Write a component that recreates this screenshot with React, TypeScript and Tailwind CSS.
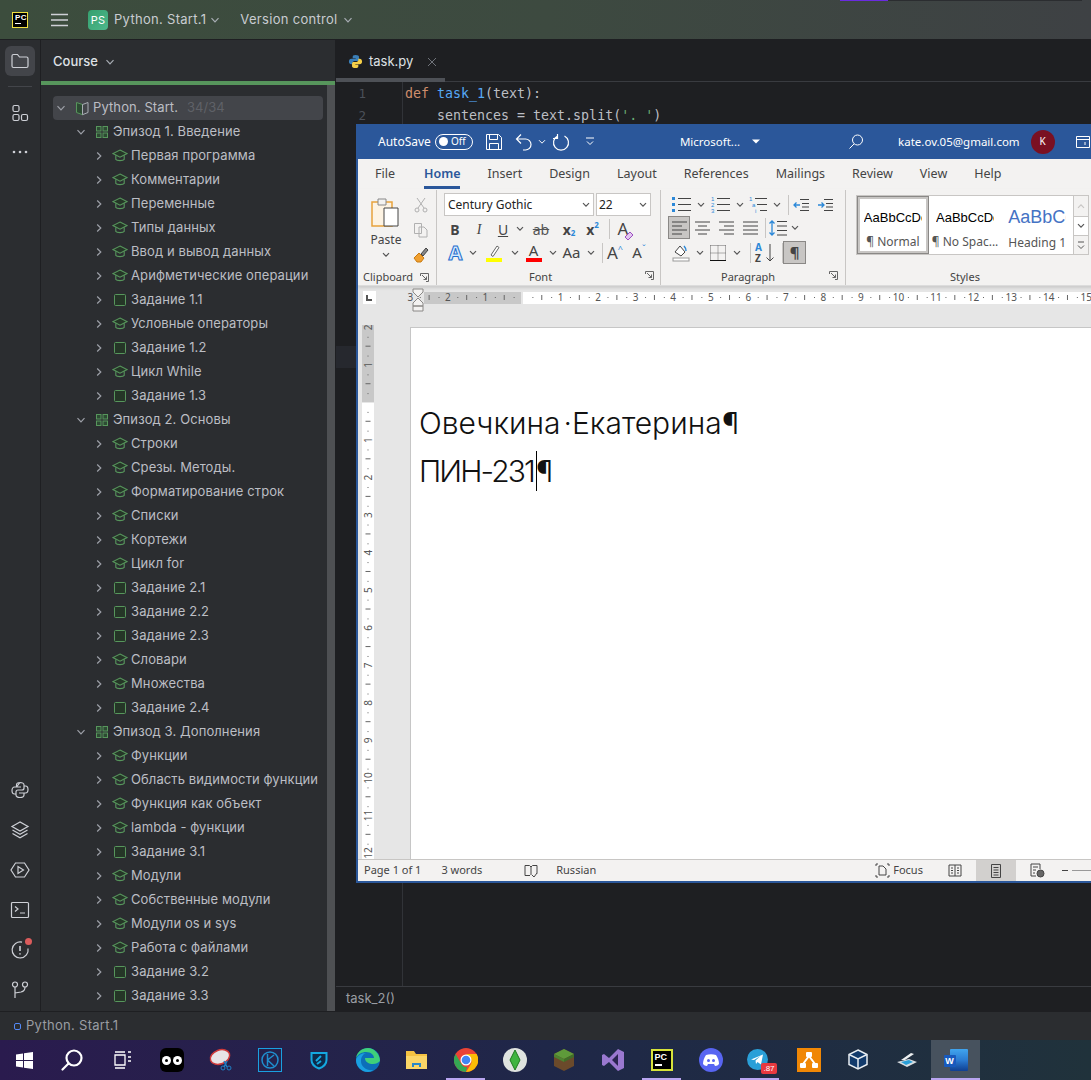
import React from 'react';

type Kind = 'book' | 'episode' | 'lesson' | 'task';
interface Row { label: string; kind: Kind; level: number; open?: boolean; extra?: string }

const les = (label: string): Row => ({ label, kind: 'lesson', level: 2 });
const tsk = (label: string): Row => ({ label, kind: 'task', level: 2 });
const ep = (label: string): Row => ({ label, kind: 'episode', level: 1, open: true });

const rows: Row[] = [
  { label: 'Python. Start.', kind: 'book', level: 0, open: true, extra: '34/34' },
  ep('Эпизод 1. Введение'),
  les('Первая программа'), les('Комментарии'), les('Переменные'), les('Типы данных'),
  les('Ввод и вывод данных'), les('Арифметические операции'), tsk('Задание 1.1'),
  les('Условные операторы'), tsk('Задание 1.2'), les('Цикл While'), tsk('Задание 1.3'),
  ep('Эпизод 2. Основы'),
  les('Строки'), les('Срезы. Методы.'), les('Форматирование строк'), les('Списки'),
  les('Кортежи'), les('Цикл for'), tsk('Задание 2.1'), tsk('Задание 2.2'), tsk('Задание 2.3'),
  les('Словари'), les('Множества'), tsk('Задание 2.4'),
  ep('Эпизод 3. Дополнения'),
  les('Функции'), les('Область видимости функции'), les('Функция как объект'),
  les('lambda - функции'), tsk('Задание 3.1'), les('Модули'), les('Собственные модули'),
  les('Модули os и sys'), les('Работа с файлами'), tsk('Задание 3.2'), tsk('Задание 3.3'),
];

// --- ide icons ---
function Chev({ open, className = '' }: { open?: boolean; className?: string }) {
  return (
    <svg width="10" height="10" viewBox="0 0 10 10" fill="none" stroke="currentColor" strokeWidth="1.2" className={className}>
      {open ? <path d="M1.5 3.2 5 6.8l3.5-3.6" /> : <path d="M3.2 1.5 6.8 5 3.2 8.5" />}
    </svg>
  );
}

function TreeIcon({ kind }: { kind: Kind }) {
  if (kind === 'book') return (
    <svg width="15" height="15" viewBox="0 0 15 15" fill="none" strokeWidth="1">
      <path d="M7.5 3.5 1.5 1.5v10l6 2.2z" fill="#2d4a33" stroke="#57965c" />
      <path d="M7.5 3.5l5.5-2v10l-5.5 2.2z" stroke="#a8adb4" />
    </svg>
  );
  if (kind === 'episode') return (
    <svg width="14" height="14" viewBox="0 0 14 14" fill="#2d4a33" stroke="#57965c">
      <rect x="1.5" y="1.5" width="4.5" height="4.5" /><rect x="8" y="1.5" width="4.5" height="4.5" />
      <rect x="1.5" y="8" width="4.5" height="4.5" /><rect x="8" y="8" width="4.5" height="4.5" />
    </svg>
  );
  if (kind === 'task') return (
    <svg width="14" height="14" viewBox="0 0 14 14"><rect x="1.5" y="1.5" width="11" height="11" rx="1" fill="#253627" stroke="#57965c" /></svg>
  );
  return (
    <svg width="16" height="14" viewBox="0 0 16 14" fill="none" stroke="#57965c" strokeWidth="1.1">
      <path d="M8 1 15 4.6 8 8.2 1 4.6z" fill="#253627" />
      <path d="M3.8 6.2v4.2c1 1.6 7.4 1.6 8.4 0V6.2" />
    </svg>
  );
}

function Stripe({ children, className = '' }: { children: React.ReactNode; className?: string }) {
  return <div className={`flex items-center justify-center w-[30px] h-[30px] rounded-md ${className}`}>{children}</div>;
}

const st = { fill: 'none', stroke: '#ced0d6', strokeWidth: 1.2 };

function LeftStripe() {
  return (
    <div className="w-[41px] shrink-0 flex flex-col items-center border-r border-[#1e1f22] bg-[#2b2d30] pt-[6px] pb-[6px]">
      <Stripe className="bg-[#43454a]">
        <svg width="20" height="20" viewBox="0 0 20 20" {...st}><path d="M2 5a1.5 1.5 0 0 1 1.5-1.5h4l2 2.5h7A1.5 1.5 0 0 1 18 7.500V15a1.5 1.5 0 0 1-1.500 1.500h-13A1.500 1.500 0 0 1 2 15z" /></svg>
      </Stripe>
      <div className="w-6 h-px bg-[#43454a] mt-[10px] mb-[11px]" />
      <Stripe>
        <svg width="20" height="20" viewBox="0 0 20 20" {...st}><rect x="3" y="2.500" width="6" height="6" rx="1.500" /><rect x="3" y="11.500" width="6" height="6" rx="1.500" /><rect x="11.500" y="11.500" width="6" height="6" rx="1.500" /></svg>
      </Stripe>
      <Stripe className="mt-[9px]">
        <svg width="18" height="6" viewBox="0 0 18 6" fill="#ced0d6"><circle cx="3" cy="3" r="1.300" /><circle cx="9" cy="3" r="1.300" /><circle cx="15" cy="3" r="1.300" /></svg>
      </Stripe>
      <div className="flex-1" />
      <div className="flex flex-col items-center gap-[10px]">
        <Stripe>
          <svg width="20" height="20" viewBox="0 0 20 20" {...st}><path d="M10 2.500c-2.500 0-3.500 1-3.500 2.500v2H11M6.500 7H4.500C3 7 2 8.500 2 10.500S3 14 4.500 14H6v-2c0-1.300.8-2 2-2h4c1.300 0 2-.8 2-2V5c0-1.500-1.500-2.500-4-2.500zM14 6h1.500C17 6 18 7.500 18 9.500S17 13 15.500 13H9M14 13v2c0 1.500-1.500 2.500-4 2.500s-4-1-4-2.500v-1" /></svg>
        </Stripe>
        <Stripe>
          <svg width="20" height="20" viewBox="0 0 20 20" {...st}><path d="M10 2 2 6.500 10 11l8-4.500zM2.500 10 10 14.200 17.500 10M2.500 13.500 10 17.800l7.500-4.300" /></svg>
        </Stripe>
        <Stripe>
          <svg width="22" height="20" viewBox="0 0 22 20" {...st}><path d="M6.500 3h9L20 10l-4.500 7h-9L2 10z" /><path d="M9 6.500v7l5.500-3.500z" /></svg>
        </Stripe>
        <Stripe>
          <svg width="20" height="18" viewBox="0 0 20 18" {...st}><rect x="1.500" y="1.500" width="17" height="15" rx="1" /><path d="M5 5.500 8 8 5 10.500M10 12h5" /></svg>
        </Stripe>
        <Stripe className="relative">
          <svg width="20" height="20" viewBox="0 0 20 20" {...st}><path d="M12 2.200A8 8 0 1 0 18 8.500" /><path d="M10 6v5M10 13.200v1.300" strokeWidth="1.600" /></svg>
          <span className="absolute top-[3px] right-[3px] w-[7px] h-[7px] rounded-full bg-[#db5c5c]" />
        </Stripe>
        <Stripe>
          <svg width="20" height="20" viewBox="0 0 20 20" {...st}><circle cx="5" cy="4.500" r="2.500" /><circle cx="15" cy="4.500" r="2.500" /><path d="M5 7v11M15 7c0 3-1.500 4.500-4 5l-6 1" /></svg>
        </Stripe>
      </div>
    </div>
  );
}

function TreeRow({ row }: { row: Row }) {
  const pad = row.level === 0 ? 'pl-[3px]' : row.level === 1 ? 'pl-[23px]' : 'pl-[41px]';
  const bg = row.level === 0 ? 'bg-[#43454a] rounded' : '';
  return (
    <div className={`h-6 flex items-center ${pad} ${bg} whitespace-nowrap`}>
      <Chev open={row.open} className="text-[#9da0a8]" />
      <div className="flex justify-center w-[16px] ml-[8px] mr-[3px]"><TreeIcon kind={row.kind} /></div>
      <span className="text-[13px] text-[#bcbec4] tracking-[0.1px]">{row.label}</span>
      {row.extra && <span className="ml-[9px] text-[13px] text-[#5f6167]">{row.extra}</span>}
    </div>
  );
}

function CoursePanel() {
  return (
    <div className="w-[294px] shrink-0 flex flex-col bg-[#2b2d30]">
      <div className="h-[41px] flex items-center pl-3 pt-[2px] gap-[7px] text-[#dfe1e5] text-[13px] font-medium">
        Course <Chev open className="text-[#a8adb4]" />
      </div>
      <div className="h-1 bg-[#57965c] shrink-0" />
      <div className="flex-1 flex min-h-0">
        <div className="flex-1 pl-3 pr-[4px] pt-[9px] overflow-hidden">
          <div className="mt-[2px]">
            {rows.map((r, i) => <TreeRow key={i} row={r} />)}
          </div>
        </div>
        <div className="w-2 bg-[#4e5053]" />
      </div>
    </div>
  );
}

function PyLogo() {
  return (
    <svg width="15" height="15" viewBox="0 0 16 16">
      <path d="M8 1C5.500 1 5 2 5 3v1.500h3.200V5H3.500C2 5 1 6.200 1 8s1 3 2.500 3H5V9.500C5 8.300 5.800 7.500 7 7.500h3c1 0 1.700-.7 1.700-1.700V3C11.700 1.800 10.500 1 8 1z" fill="#3b7fb8" />
      <path d="M8 15c2.500 0 3-1 3-2v-1.500H7.800V11h4.700c1.500 0 2.500-1.200 2.500-3s-1-3-2.500-3H11v1.500c0 1.200-.8 2-2 2H6c-1 0-1.700.7-1.700 1.700V13c0 1.200 1.200 2 3.700 2z" fill="#f5cf48" />
    </svg>
  );
}

function Editor() {
  return (
    <div className="flex-1 flex flex-col bg-[#1e1f22] border-l border-[#1e1f22] min-w-0">
      <div className="h-[38px] flex items-center pl-[12px] pt-[5px] gap-[6px] text-[13px] text-[#dfe1e5] shrink-0">
        <PyLogo /><span>task.py</span>
        <svg width="10" height="10" viewBox="0 0 10 10" stroke="#6f737a" className="ml-[8px]"><path d="m1 1 8 8M9 1 1 9" /></svg>
      </div>
      <div className="h-1 flex shrink-0 border-b border-[#393b40]">
        <div className="w-[109px] h-1 bg-[#4e5157]" />
      </div>
      <div className="flex-1 flex min-h-0 font-['DejaVu_Sans_Mono',monospace] text-[13.3px] leading-[22px]">
        <div className="w-[67px] shrink-0 border-r border-[#313338] pt-[1px] text-[#4b5059] text-[12.500px] text-right">
          <div className="pr-[36px] h-[22px]">1</div>
          <div className="pr-[36px] h-[22px]">2</div>
          <div className="mt-[219px] h-[22px] bg-[#26282e] pr-[36px]">1</div>
        </div>
        <div className="pl-[2px] pt-[1px] whitespace-pre text-[#bcbec4]">
          <div><span className="text-[#cf8e6d]">def </span><span className="text-[#56a8f5]">task_1</span>(text):</div>
          <div>    sentences = text.split(<span className="text-[#6aab73]">'. '</span>)</div>
        </div>
      </div>
      <div className="h-[25px] shrink-0 border-t border-[#393b40] flex items-center pl-[10px] text-[13px] text-[#9a9da3]">task_2()</div>
    </div>
  );
}

// --- word bits ---
const wi = { fill: 'none', stroke: '#444', strokeWidth: 1 };
const Drop = ({ className = '' }: { className?: string }) => (
  <svg width="8" height="6" viewBox="0 0 8 6" fill="none" stroke="#555" strokeWidth="1.200" className={`shrink-0 ${className}`}><path d="M1 1.200 4 4.200 7 1.200" /></svg>
);
const Launcher = () => (
  <svg width="9" height="9" viewBox="0 0 9 9" fill="none" stroke="#666"><path d="M.5 3V.5H8.500V8.500H6M2 2l4.500 4.500M6.500 3.500v3h-3" /></svg>
);
const Cell = ({ w, children, className = '' }: { w: string; children?: React.ReactNode; className?: string }) => (
  <div className={`flex items-center justify-center shrink-0 ${w} ${className}`}>{children}</div>
);
const Sep = ({ h = 'h-[20px]' }: { h?: string }) => <div className={`w-px ${h} bg-[#c8c6c4] shrink-0`} />;

function Lines({ kind }: { kind: 'left' | 'center' | 'right' | 'just' }) {
  const d = {
    left: 'M2 3h15M2 7h10M2 11h15M2 15h10',
    center: 'M2 3h15M5 7h9M2 11h15M5 15h9',
    right: 'M2 3h15M7 7h10M2 11h15M7 15h10',
    just: 'M2 3h15M2 7h15M2 11h15M2 15h15',
  }[kind];
  return <svg width="19" height="18" viewBox="0 0 19 18" {...wi}><path d={d} /></svg>;
}

function ClipboardGroup() {
  return (
    <div className="w-[79px] shrink-0 flex flex-col border-r border-[#c8c6c4]">
      <div className="flex flex-1 pl-[12px] pt-[6px]">
        <div className="w-[32px] flex flex-col items-center text-[12px] text-[#444] leading-[14px]">
          <svg width="32" height="34" viewBox="0 0 32 34" fill="none">
            <path d="M2 6h20v24H2z" fill="#fdf3e3" stroke="#e8a33c" strokeWidth="1.500" />
            <path d="M8 3h8v6H8z" fill="#f3f2f1" stroke="#888" />
            <path d="M14 12h14v18H14z" fill="#fff" stroke="#444" />
          </svg>
          <span className="mt-[3px]">Paste</span>
          <Drop className="mt-[5px]" />
        </div>
        <div className="ml-[11px] flex flex-col items-center gap-[9px] pt-[1px]">
          <svg width="14" height="16" viewBox="0 0 14 16" fill="none" stroke="#b0b0b0"><path d="m3 1 7 10M11 1 4 11" /><circle cx="3" cy="13" r="2" /><circle cx="11" cy="13" r="2" /></svg>
          <svg width="16" height="16" viewBox="0 0 16 16" fill="none" stroke="#b0b0b0"><path d="M1.500 1.500h7v10h-7zM6 5h5l3 3v7H6z" /></svg>
          <svg width="16" height="16" viewBox="0 0 16 16" fill="none"><path d="M1 11l5-5 5 5-3 4H4z" fill="#f0a030" stroke="#c87a10" /><path d="M8 7l5-6 2 2-5 6z" fill="#888" stroke="#444" /></svg>
        </div>
      </div>
      <div className="h-[16px] flex items-center justify-between pl-[5px] pr-[7px] text-[11px] text-[#444]">Clipboard <Launcher /></div>
    </div>
  );
}

function FontGroup() {
  const t = "text-[#444] font-['Noto_Sans',sans-serif]";
  return (
    <div className="w-[224px] shrink-0 flex flex-col border-r border-[#c8c6c4] pl-[7px]">
      <div className="flex gap-[2px] pt-[3px]">
        <div className="w-[150px] h-[23px] bg-white border border-[#c8c6c4] flex items-center justify-between px-[3px] text-[12px] text-[#222]">Century Gothic <Drop /></div>
        <div className="w-[55px] h-[23px] bg-white border border-[#c8c6c4] flex items-center justify-between px-[2px] pr-[3px] text-[12px] text-[#222]">22 <Drop /></div>
      </div>
      <div className={`flex items-center h-[22px] mt-[2px] text-[14px] ${t}`}>
        <Cell w="w-[22px]" className="font-bold">B</Cell>
        <Cell w="w-[26px]" className="italic font-['Liberation_Serif',serif]">I</Cell>
        <Cell w="w-[22px]" className="underline">U</Cell>
        <Cell w="w-[12px]"><Drop /></Cell>
        <Cell w="w-[30px]" className="line-through text-[#555]">ab</Cell>
        <Cell w="w-[26px]" className="font-bold">x<span className="text-[8px] text-[#2b88d8] mt-[8px]">2</span></Cell>
        <Cell w="w-[21px]" className="font-bold">x<span className="text-[8px] text-[#2b88d8] -mt-[8px]">2</span></Cell>
        <Cell w="w-[6px]" />
        <Sep />
        <Cell w="w-[26px]" className="relative text-[17px]">A
          <svg width="10" height="10" viewBox="0 0 10 10" className="absolute right-[2px] bottom-[1px]"><path d="M1 6l5-5 3 3-5 5z" fill="#e2c6f0" stroke="#9b4fc0" /></svg>
        </Cell>
      </div>
      <div className={`flex items-center h-[23px] mt-[1px] ${t}`}>
        <Cell w="w-[23px]" className="text-[20px] font-bold text-[#d5e9fb] leading-none [-webkit-text-stroke:1px_#1f6fd0]">A</Cell>
        <Cell w="w-[12px]"><Drop /></Cell>
        <Cell w="w-[30px]" className="flex-col text-[0px]">
          <svg width="17" height="16" viewBox="0 0 17 16"><path d="M5 11l6-9 2 1.500-6 9z" fill="#fff" stroke="#666" /></svg>
          <div className="w-[16px] h-[4px] bg-[#ffff00] -mt-[2px]" />
        </Cell>
        <Cell w="w-[11px]"><Drop /></Cell>
        <Cell w="w-[27px]" className="flex-col text-[15px] leading-[15px]">A<div className="w-[16px] h-[4px] bg-[#ff0000]" /></Cell>
        <Cell w="w-[11px]"><Drop /></Cell>
        <Cell w="w-[27px]" className="text-[15px]">Aa</Cell>
        <Cell w="w-[11px]"><Drop /></Cell>
        <Cell w="w-[6px]" />
        <Sep />
        <Cell w="w-[24px]" className="text-[17px]">A<span className="text-[9px] text-[#2b88d8] -mt-[8px]">^</span></Cell>
        <Cell w="w-[24px]" className="text-[15px]">A<span className="text-[9px] text-[#2b88d8] -mt-[8px]">ˇ</span></Cell>
      </div>
      <div className="flex-1 flex items-end justify-between pr-[6px] text-[11px] text-[#444]">
        <span className="ml-[85px] h-[16px]">Font</span>
        <div className="h-[14px]"><Launcher /></div>
      </div>
    </div>
  );
}

function ListIcon({ numbered }: { numbered?: boolean }) {
  return (
    <svg width="21" height="17" viewBox="0 0 21 17" fill="none">
      <path d="M7 2.500h13M7 8.500h13M7 14.500h13" stroke="#444" />
      {numbered
        ? <g fill="#2b88d8" fontSize="6" fontFamily="Liberation Sans"><text x="1" y="5">1</text><text x="1" y="11">2</text><text x="1" y="17">3</text></g>
        : <g fill="#2b88d8"><rect x="1" y="1" width="3" height="3" /><rect x="1" y="7" width="3" height="3" /><rect x="1" y="13" width="3" height="3" /></g>}
    </svg>
  );
}

function ParagraphGroup() {
  return (
    <div className="w-[185px] shrink-0 flex flex-col border-r border-[#c8c6c4] pl-[7px]">
      <div className="flex items-center h-[21px] mt-[4px]">
        <Cell w="w-[26px]"><ListIcon /></Cell><Cell w="w-[13px]"><Drop /></Cell>
        <Cell w="w-[26px]"><ListIcon numbered /></Cell><Cell w="w-[13px]"><Drop /></Cell>
        <Cell w="w-[25px]">
          <svg width="19" height="17" viewBox="0 0 19 17" fill="none"><path d="M6 2.500h12M8 8.500h10M11 14.500h7" stroke="#444" /><g fill="#2b88d8" fontSize="6" fontFamily="Liberation Sans"><text x="0" y="5">1</text><text x="3" y="11">a</text><text x="6" y="17">i</text></g></svg>
        </Cell>
        <Cell w="w-[11px]"><Drop /></Cell>
        <Cell w="w-[6px]" /><Sep />
        <Cell w="w-[24px]">
          <svg width="17" height="14" viewBox="0 0 17 14" fill="none" stroke="#444"><path d="M7 1.500h9M9 5.500h7M9 9h7M7 12.500h9" /><path d="M7 7H1M3.500 4.500 1 7l2.500 2.500" stroke="#2b88d8" strokeWidth="1.300" /></svg>
        </Cell>
        <Cell w="w-[24px]">
          <svg width="17" height="14" viewBox="0 0 17 14" fill="none" stroke="#444"><path d="M7 1.500h9M9 5.500h7M9 9h7M7 12.500h9" /><path d="M1 7h6M4.500 4.500 7 7 4.500 9.500" stroke="#2b88d8" strokeWidth="1.300" /></svg>
        </Cell>
      </div>
      <div className="flex items-center h-[23px] mt-[1px]">
        <Cell w="w-[22px]" className="h-[23px] bg-[#c8c6c4] border border-[#8a8886]"><Lines kind="left" /></Cell>
        <Cell w="w-[24px]"><Lines kind="center" /></Cell>
        <Cell w="w-[24px]"><Lines kind="right" /></Cell>
        <Cell w="w-[24px]"><Lines kind="just" /></Cell>
        <Cell w="w-[3px]" /><Sep />
        <Cell w="w-[24px]">
          <svg width="20" height="18" viewBox="0 0 20 18" fill="none"><path d="M9 2.500h10M9 7h10M9 11.500h10M9 16h10" stroke="#444" /><path d="M4 2v14M1.500 4.500 4 2l2.500 2.500M1.500 13.500 4 16l2.500-2.500" stroke="#2b88d8" strokeWidth="1.300" /></svg>
        </Cell>
        <Cell w="w-[10px]"><Drop /></Cell>
      </div>
      <div className="flex items-center h-[23px] mt-[2px]">
        <Cell w="w-[25px]">
          <svg width="18" height="19" viewBox="0 0 18 19" fill="none"><path d="M3 9l5-6 5 6-4 4z" stroke="#444" fill="#fff" /><path d="M12 3c1 1 2 3 2 5" stroke="#2b88d8" strokeWidth="1.500" /><rect x="1" y="15" width="16" height="3" fill="#fff" stroke="#999" /></svg>
        </Cell>
        <Cell w="w-[13px]"><Drop /></Cell>
        <Cell w="w-[24px]">
          <svg width="16" height="16" viewBox="0 0 16 16" fill="none" stroke="#666" strokeDasharray="1 1"><path d="M.5.500h15M.5 8h15M8 .5v15M.5.500v15M15.500.500v15" /><path d="M0 15.500h16" stroke="#111" strokeDasharray="none" /></svg>
        </Cell>
        <Cell w="w-[13px]"><Drop /></Cell>
        <Cell w="w-[7px]" /><Sep />
        <Cell w="w-[27px]" className="relative">
          <svg width="20" height="20" viewBox="0 0 20 20" fill="none" stroke="#444"><path d="M15 1v17M11.500 14.500 15 18l3.500-3.500" /></svg>
          <span className="absolute left-[4px] top-[-1px] text-[10px] leading-[11px] font-bold text-[#2b88d8]">A<br /><span className="text-[#444]">Z</span></span>
        </Cell>
        <Cell w="w-[4px]" /><Sep />
        <Cell w="w-[23px]" className="h-[23px] bg-[#c8c6c4] border border-[#8a8886] text-[15px] font-bold text-[#444]">¶</Cell>
      </div>
      <div className="flex-1 flex items-end justify-between pr-[7px] text-[11px] text-[#444]">
        <span className="ml-[53px] h-[16px]">Paragraph</span>
        <div className="h-[14px]"><Launcher /></div>
      </div>
    </div>
  );
}

function StylesGroup() {
  const label = 'text-[12px] text-[#555] leading-[14px] whitespace-nowrap';
  const sample = "font-['Liberation_Sans',sans-serif] overflow-hidden whitespace-nowrap";
  return (
    <div className="flex-1 flex flex-col pl-[10px]">
      <div className="flex mt-[5px] h-[60px]">
        <div className="w-[218px] flex bg-white border border-[#c8c6c4]">
          <div className="w-[72px] h-full border-[3px] border-[#c8c6c4] outline outline-1 -outline-offset-1 outline-[#8a8886] flex flex-col items-center pt-[11px] gap-[10px]">
            <div className={`${sample} w-[58px] text-[13px] leading-[15px] text-black`}>AaBbCcDc</div>
            <div className={label}>¶ Normal</div>
          </div>
          <div className="w-[73px] flex flex-col items-center pt-[14px] gap-[10px]">
            <div className={`${sample} w-[58px] text-[13px] leading-[15px] text-black`}>AaBbCcDc</div>
            <div className={label}>¶ No Spac...</div>
          </div>
          <div className="w-[72px] flex flex-col items-center pt-[11px] gap-[8px]">
            <div className={`${sample} w-[58px] text-[18px] leading-[21px] text-[#4472c4]`}>AaBbCc</div>
            <div className={label}>Heading 1</div>
          </div>
        </div>
        <div className="w-[15px] flex flex-col border border-l-0 border-[#c8c6c4] bg-[#f3f2f1]">
          <Cell w="w-full" className="h-[20px]"><svg width="8" height="6" viewBox="0 0 8 6" fill="none" stroke="#c8c6c4" strokeWidth="1.200"><path d="M1 4.800 4 1.800 7 4.800" /></svg></Cell>
          <Cell w="w-full" className="h-[20px] border-y border-[#c8c6c4] bg-white"><Drop /></Cell>
          <Cell w="w-full" className="flex-1"><svg width="8" height="9" viewBox="0 0 8 9" fill="none" stroke="#555"><path d="M1 1h6M1 4.500 4 7.500 7 4.500" /></svg></Cell>
        </div>
      </div>
      <div className="flex-1 flex items-end text-[11px] text-[#444]">
        <span className="ml-[94px] h-[16px]">Styles</span>
      </div>
    </div>
  );
}

function HRuler() {
  const x0 = 118; // left margin in svg coords
  const inch = 37.55;
  const marks: React.ReactNode[] = [];
  for (let i = -12; i <= 62; i++) {
    const x = x0 + (i * inch) / 4;
    const n = i / 4;
    if (i % 4 === 0 && i !== 0) {
      marks.push(<text key={i} x={x} y="13" fontSize="10" textAnchor="middle" fill="#555" fontFamily="Noto Sans">{Math.abs(n)}</text>);
    } else if (i % 2 === 0 && i !== 0) {
      marks.push(<path key={i} d={`M${x} 7v5`} stroke="#666" />);
    } else if (i !== 0) {
      marks.push(<rect key={i} x={x} y="9" width="1" height="1" fill="#666" />);
    }
  }
  return (
    <svg width="686" height="28" viewBox="0 0 686 28" className="block">
      <rect x="19" y="4" width="97" height="12" fill="#c8c8c8" />
      <rect x="118" y="4" width="568" height="12" fill="#fff" />
      {marks}
      <path d="M8 1h10v3l-5 5-5-5zM8 18v-3l5-5 5 5v3zM8 18h10v5H8z" fill="#f3f2f1" stroke="#8a8886" />
    </svg>
  );
}

function VRuler() {
  const zero = 77.5;
  const inch = 37.55;
  const marks: React.ReactNode[] = [];
  for (let i = -8; i <= 50; i++) {
    const y = zero + (i * inch) / 4;
    if (i % 4 === 0 && i !== 0) {
      marks.push(<text key={i} x="0" y="0" fontSize="10" textAnchor="middle" fill="#555" fontFamily="Noto Sans" transform={`translate(9.500 ${y}) rotate(-90)`}>{Math.abs(i / 4)}</text>);
    } else if (i % 2 === 0 && i !== 0) {
      marks.push(<path key={i} d={`M3.500 ${y}h5`} stroke="#666" />);
    } else if (i !== 0) {
      marks.push(<rect key={i} x="5.500" y={y} width="1" height="1" fill="#666" />);
    }
  }
  return (
    <svg width="12" height="535" viewBox="0 0 12 535" className="block shrink-0">
      <rect width="12" height="77" fill="#c8c8c8" />
      <rect y="78" width="12" height="457" fill="#fff" />
      {marks}
    </svg>
  );
}

function WordWindow() {
  const ui = "font-['Noto_Sans',sans-serif]";
  return (
    <div className={`absolute left-[356px] top-[124px] w-[760px] h-[759px] flex flex-col border-l-2 border-b-2 border-[#2b579a] bg-[#e6e6e6] ${ui}`}>
      <div className="h-[35px] shrink-0 bg-[#2b579a] flex items-center text-white text-[12px] pl-[20px]">
        <span>AutoSave</span>
        <div className="ml-[4px] w-[38px] h-[16px] rounded-full border border-white flex items-center pl-[3px] gap-[3px] text-[10px]">
          <span className="w-[9px] h-[9px] rounded-full bg-white" /> Off
        </div>
        <svg width="18" height="18" viewBox="0 0 18 18" fill="none" stroke="#fff" className="ml-[12px]"><path d="M1.500 1.500h12l3 3v12h-15zM4.500 1.500v5h8v-5M4.500 16.500v-6h9v6" /></svg>
        <svg width="18" height="18" viewBox="0 0 18 18" fill="none" stroke="#fff" strokeWidth="1.200" className="ml-[12px]"><path d="M2 6h8.500a5.500 5.500 0 0 1 0 11H8M6 1.500 1.500 6 6 10.500" /></svg>
        <svg width="8" height="6" viewBox="0 0 8 6" fill="none" stroke="#fff" className="ml-[5px]"><path d="M1 1.200 4 4.200 7 1.200" /></svg>
        <svg width="18" height="18" viewBox="0 0 18 18" fill="none" stroke="#fff" strokeWidth="1.200" className="ml-[6px]"><path d="M5.500 3a7.500 7.500 0 1 0 7 0M5.500 1v4.500H1" /></svg>
        <svg width="10" height="9" viewBox="0 0 10 9" fill="none" stroke="#fff" className="ml-[15px]"><path d="M1 1h8M2 4.500l3 3 3-3" /></svg>
        <span className="ml-[85px] text-[11.500px] whitespace-nowrap">Microsoft...</span>
        <svg width="8" height="5" viewBox="0 0 8 5" fill="#fff" className="ml-[12px]"><path d="M0 .5h8L4 4.500z" /></svg>
        <svg width="16" height="16" viewBox="0 0 16 16" fill="none" stroke="#fff" className="ml-[88px]"><circle cx="9.500" cy="6" r="5" /><path d="M6 10 1.500 14.500" /></svg>
        <span className="ml-[34px] text-[11.500px] whitespace-nowrap">kate.ov.05@gmail.com</span>
        <span className="ml-[11px] w-[24px] h-[24px] rounded-full bg-[#7a1022] flex items-center justify-center text-[10px] shrink-0">K</span>
        <svg width="14" height="12" viewBox="0 0 14 12" fill="none" stroke="#fff" className="ml-[21px] shrink-0"><path d="M.5.500h13v11H.5zM.5 3.500h13M9 6v3" /></svg>
      </div>
      <div className="h-[30px] shrink-0 bg-[#f3f2f1] flex items-center pl-[17px] pt-[1px] gap-[27px] text-[12.500px] text-[#444]">
        <span>File</span>
        <span className="relative ml-[2px] text-[#2b579a] font-semibold">Home
          <span className="absolute left-0 right-0 -bottom-[5px] h-[3px] bg-[#2b579a]" />
        </span>
        <span>Insert</span><span>Design</span><span>Layout</span><span>References</span>
        <span>Mailings</span><span>Review</span><span>View</span><span>Help</span>
      </div>
      <div className="h-[97px] shrink-0 bg-[#f3f2f1] flex pt-[1px] border-b border-[#dcdcdc] shadow-[0_2px_3px_rgba(0,0,0,0.12)]">
        <ClipboardGroup /><FontGroup /><ParagraphGroup /><StylesGroup />
      </div>
      <div className="h-[39px] shrink-0 flex pt-[2px]">
        <div className="ml-[5px] mt-[3px] w-[13px] h-[13px] bg-white flex items-end pl-[3px] pb-[3px]">
          <div className="w-[6px] h-[6px] border-l-2 border-b-2 border-[#555]" />
        </div>
        <div className="ml-[29px]"><HRuler /></div>
      </div>
      <div className="flex-1 flex min-h-0 overflow-hidden">
        <div className="ml-[4px]"><VRuler /></div>
        <div className="ml-[36px] mt-[2px] flex-1 bg-white border-l border-t border-[#c6c6c6] pl-[8px] pt-[71px] text-[#111] text-[30px] leading-[48px] whitespace-nowrap font-['Inter',sans-serif] font-light">
          <div>Овечкина<span className="ml-[3px]">·</span>Екатерина¶</div>
          <div className="flex items-center"><span className="tracking-[-1.900px]">ПИН-231</span><span className="w-px h-[40px] bg-black ml-[2px] -mr-[1px]" />¶</div>
        </div>
      </div>
      <div className="h-[22px] shrink-0 bg-[#f3f2f1] border-t border-[#c8c6c4] flex items-center text-[11px] text-[#444] pl-[6px] whitespace-nowrap">
        <span>Page 1 of 1</span>
        <span className="ml-[20px]">3 words</span>
        <svg width="14" height="14" viewBox="0 0 14 14" fill="none" stroke="#444" className="ml-[42px]"><path d="M1 1.500h4.500L7 3l1.500-1.500H13v8M1 1.500v10h5M7 3v8" /><path d="m8 11 2 2 3-4" /></svg>
        <span className="ml-[18px]">Russian</span>
        <svg width="15" height="15" viewBox="0 0 15 15" fill="none" stroke="#444" className="ml-[279px]"><path d="M4 3h4l3 3v6H4zM1 3V1h2M14 3V1h-2M1 12v2h2M14 12v2h-2" /></svg>
        <span className="ml-[3px]">Focus</span>
        <svg width="14" height="13" viewBox="0 0 14 13" fill="none" stroke="#444" className="ml-[25px]"><path d="M1 1h12v11H1zM7 1v11M3 4h2M3 6.500h2M3 9h2M9 4h2M9 6.500h2M9 9h2" /></svg>
        <div className="ml-[14px] w-[40px] h-[21px] bg-[#d2d0ce] flex items-center justify-center">
          <svg width="10" height="14" viewBox="0 0 10 14" fill="none" stroke="#444"><path d="M.5.500h9v13h-9zM2.500 3.500h5M2.500 6h5M2.500 8.500h5M2.500 11h5" /></svg>
        </div>
        <svg width="15" height="15" viewBox="0 0 15 15" fill="none" stroke="#444" className="ml-[14px]"><path d="M1 1h9v5M1 1v12h5M3 4h5M3 7h3M3 10h2" /><circle cx="10.500" cy="10.500" r="3.500" fill="#666" /></svg>
        <span className="ml-[17px] w-[6px] h-px bg-[#444]" />
        <span className="ml-[4px] w-[30px] h-px bg-[#999]" />
      </div>
    </div>
  );
}

// --- taskbar ---
function TaskCell({ children, line, active }: { children?: React.ReactNode; line?: boolean; active?: boolean }) {
  return (
    <div className={`relative w-[49px] h-10 flex items-center justify-center shrink-0 ${active ? 'bg-[#47525e]' : ''}`}>
      {children}
      {line && <span className={`absolute bottom-0 h-[2px] bg-[#b9a5f0] ${active ? 'inset-x-0' : 'left-[5px] right-[5px]'}`} />}
    </div>
  );
}

function Taskbar() {
  return (
    <div className="h-10 shrink-0 flex bg-gradient-to-r from-[#2a1b4e] via-[#1f2748] to-[#20323b]">
      <TaskCell>
        <svg width="17" height="17" viewBox="0 0 17 17" fill="#fff"><path d="M0 2.400 7 1.400v6.600H0zM8 1.300 17 0v8H8zM0 9h7v6.600L0 14.600zM8 9h9v8l-9-1.300z" /></svg>
      </TaskCell>
      <TaskCell>
        <svg width="24" height="24" viewBox="0 0 24 24" fill="none" stroke="#fff" strokeWidth="2.200" className="-ml-[3px]"><circle cx="14" cy="10" r="7.500" /><path d="M8.500 15.500 2.500 21.500" strokeLinecap="round" /></svg>
      </TaskCell>
      <TaskCell>
        <svg width="18" height="18" viewBox="0 0 18 18" fill="none" stroke="#fff" strokeWidth="1.300"><path d="M1 1h10M1 17h10M1 4h10v10H1zM14 1h3M14 6h3M14 10h3" /></svg>
      </TaskCell>
      <TaskCell>
        <div className="w-6 h-6 rounded-md bg-black flex items-center justify-center gap-[2px]">
          <span className="w-[9px] h-[9px] rounded-full bg-white flex items-center justify-center"><span className="w-[3px] h-[3px] rounded-full bg-black" /></span>
          <span className="w-[9px] h-[9px] rounded-full bg-white flex items-center justify-center"><span className="w-[3px] h-[3px] rounded-full bg-black" /></span>
        </div>
      </TaskCell>
      <TaskCell>
        <svg width="26" height="24" viewBox="0 0 26 24" fill="none"><ellipse cx="12" cy="9" rx="10" ry="7" fill="#e8e4e6" stroke="#d03a3a" strokeWidth="1.500" transform="rotate(-20 12 9)" /><path d="M16 13l3 6M19 13l-3 6" stroke="#1f7fc4" strokeWidth="1.500" /><circle cx="15" cy="20" r="2" stroke="#1f7fc4" /><circle cx="21" cy="20" r="2" stroke="#1f7fc4" /></svg>
      </TaskCell>
      <TaskCell>
        <div className="w-6 h-6 border border-[#1aa0e0] flex items-center justify-center">
          <svg width="18" height="18" viewBox="0 0 18 18" fill="none" stroke="#1f8fcf" strokeWidth="1.500"><circle cx="9" cy="9" r="8" /><path d="M6.500 3v12M6.500 9 13 4M6.500 9 13 15" /></svg>
        </div>
      </TaskCell>
      <TaskCell>
        <svg width="18" height="20" viewBox="0 0 18 20" fill="none" stroke="#14a8e0" strokeWidth="2"><path d="M1.500 3h15v7c0 4-3.500 7-7.500 8.500C5 17 1.500 14 1.500 10z" fill="#0e2a4a" /><path d="M6 11l5-5M7 14l4-3" /></svg>
      </TaskCell>
      <TaskCell>
        <svg width="24" height="24" viewBox="0 0 24 24"><circle cx="12" cy="12" r="12" fill="#0c6fb8" /><path d="M24 13C24 6 18 0 12 0 6 0 1 4 0 10c2-4 6-6 10-6 5 0 8 3 8 6H9c0 4 4 6 8 6 3 0 5-1 7-3z" fill="#3fd07a" /><path d="M5 13c0-4 2-7 5-8-5 0-9 3-10 7 0 6 5 12 12 12 2 0 4-1 5-2-6 1-12-3-12-9z" fill="#1a9fe0" /></svg>
      </TaskCell>
      <TaskCell>
        <svg width="23" height="20" viewBox="0 0 23 20"><path d="M1 1h8l2 3h11v5H1z" fill="#f5c242" /><path d="M1 6h21v13H1z" fill="#fbd667" /><path d="M7 13h9v4h-2v-2H9v2H7z" fill="#2a88c8" /></svg>
      </TaskCell>
      <TaskCell line>
        <svg width="24" height="24" viewBox="0 0 24 24"><circle cx="12" cy="12" r="12" fill="#ea4335" /><path d="M12 24A12 12 0 0 1 1.600 6L8 17c1.500 1.800 3 2 5 2z" fill="#34a853" /><path d="M12 6h10.600A12 12 0 0 1 12 24l5-8c1.200-3 .5-7-5-10z" fill="#fbbc05" /><circle cx="12" cy="12" r="5.500" fill="#fff" /><circle cx="12" cy="12" r="4.300" fill="#4285f4" /></svg>
      </TaskCell>
      <TaskCell>
        <div className="w-6 h-6 rounded-full bg-[#dfe3df] flex items-center justify-center">
          <svg width="12" height="20" viewBox="0 0 12 20"><path d="M6 0l5 10-5 10-5-10z" fill="#3fb43f" stroke="#1d7a1d" /></svg>
        </div>
      </TaskCell>
      <TaskCell>
        <svg width="22" height="24" viewBox="0 0 22 24"><path d="M11 1 21 6v12l-10 5-10-5V6z" fill="#6b4a2b" /><path d="M11 1 21 6l-10 5L1 6z" fill="#5e9a3a" /><path d="M1 6l10 5v3L1 9z" fill="#4d8230" /><path d="M21 6l-10 5v3l10-5z" fill="#3f6e28" /></svg>
      </TaskCell>
      <TaskCell>
        <svg width="24" height="24" viewBox="0 0 24 24"><path d="M17 1l6 3v16l-6 3-9-9-5 4-2-1V7l2-1 5 4z" fill="#9a78cf" /><path d="M17 6l-6 6 6 6z" fill="#2a2550" /></svg>
      </TaskCell>
      <TaskCell line>
        <div className="w-[22px] h-[22px] bg-black border-2 border-[#d7e23a] flex flex-col px-[2px] pt-[1px] text-[9px] leading-[10px] font-bold text-white font-['Liberation_Sans',sans-serif]">
          PC<span className="w-[7px] h-[2px] bg-white mt-[2px]" />
        </div>
      </TaskCell>
      <TaskCell>
        <div className="w-6 h-6 rounded-full bg-[#5865f2] flex items-center justify-center">
          <svg width="16" height="12" viewBox="0 0 16 12" fill="#fff"><path d="M3 1c3-1 7-1 10 0 2 3 3 6 3 9-1 1-2 2-4 2l-1-2H5l-1 2c-2 0-3-1-4-2 0-3 1-6 3-9z" /><circle cx="5.500" cy="6.500" r="1.500" fill="#5865f2" /><circle cx="10.500" cy="6.500" r="1.500" fill="#5865f2" /></svg>
        </div>
      </TaskCell>
      <TaskCell line>
        <div className="relative w-[21px] h-[21px] rounded-full bg-[#2a9fd8] -translate-x-[2px] -translate-y-[1px]">
          <svg width="21" height="21" viewBox="0 0 21 21" fill="#fff"><path d="M4 10.500 16 5.500l-2 10-3.500-2.500-1.500 2-.5-3.500 5-4.500-6.500 4z" /></svg>
          <span className="absolute -right-[9px] -bottom-[4px] w-[16px] h-[11px] rounded-[2px] bg-[#e8393f] text-white text-[8px] leading-[11px] text-center font-['Liberation_Sans',sans-serif]">.87</span>
        </div>
      </TaskCell>
      <TaskCell>
        <div className="w-6 h-6 bg-[#f08705] flex items-center justify-center">
          <svg width="18" height="16" viewBox="0 0 18 16" fill="#fff"><rect x="6" y="0" width="6" height="5" rx="1" /><rect x="0" y="11" width="6" height="5" rx="1" /><rect x="12" y="11" width="6" height="5" rx="1" /><path d="M9 4 3 12M9 4l6 8" stroke="#fff" strokeWidth="2" /></svg>
        </div>
      </TaskCell>
      <TaskCell>
        <svg width="22" height="24" viewBox="0 0 22 24" strokeWidth="1.500" stroke="#e8edf2"><path d="M11 2 20 6.500v10L11 21l-9-4.500v-10z" fill="#123a6b" /><path d="M2 6.500 11 11l9-4.500M11 11v10" fill="none" /></svg>
      </TaskCell>
      <TaskCell>
        <svg width="24" height="18" viewBox="0 0 24 18"><path d="M2 11l12-3 8 3-10 5z" fill="#d8dde0" /><path d="M6 11l8-2 4 2-7 3z" fill="#2a9fd8" /><path d="M6 9l10-7 3 1-9 6z" fill="#eef1f2" /></svg>
      </TaskCell>
      <TaskCell line active>
        <div className="relative w-[24px] h-[22px]">
          <div className="absolute left-[6px] top-0 w-[18px] h-[22px] rounded-[1px] bg-gradient-to-b from-[#41a5ee] via-[#2b7cd3] to-[#103f91]" />
          <div className="absolute left-0 top-[6px] w-[12px] h-[12px] rounded-[1px] bg-[#185abd] text-white text-[9px] leading-[12px] text-center font-bold font-['Liberation_Sans',sans-serif]">W</div>
        </div>
      </TaskCell>
    </div>
  );
}

export default function App() {
  return (
    <div className="relative w-[1091px] h-[1080px] overflow-hidden flex flex-col bg-[#1e1f22] font-['Inter',sans-serif]">
      <div className="relative h-10 shrink-0 flex items-center pt-[1px] bg-gradient-to-r from-[#3c4d3d] via-[#3d4a40] to-[#3e4144] border-b border-[#1e1f22] text-[13px] tracking-[0.3px] text-[#c9ccd1]">
        <span className="absolute left-[840px] top-0 w-[48px] h-px bg-[#6a2be0]" />
        <span className="absolute left-[888px] top-0 w-[194px] h-px bg-[#2b2d30]" />
        <div className="ml-3 w-4 h-4 bg-black border border-[#f0e040] flex flex-col pl-[2px] text-[8px] leading-[9px] font-bold text-white font-['Liberation_Sans',sans-serif]">
          PC<span className="w-[6px] h-px bg-white mt-[1px]" />
        </div>
        <svg width="17" height="14" viewBox="0 0 17 14" stroke="#ced0d6" strokeWidth="1.300" className="ml-[23px]"><path d="M0 1.500h17M0 7h17M0 12.500h17" /></svg>
        <div className="ml-[20px] w-5 h-5 rounded bg-gradient-to-br from-[#35a06f] to-[#4db88b] text-white text-[11px] flex items-center justify-center">PS</div>
        <span className="ml-[6px]">Python. Start.1</span>
        <Chev open className="ml-[4px] text-[#a8adb4]" />
        <span className="ml-[20px]">Version control</span>
        <Chev open className="ml-[5px] text-[#a8adb4]" />
      </div>
      <div className="flex-1 flex min-h-0">
        <LeftStripe />
        <CoursePanel />
        <Editor />
      </div>
      <div className="h-[29px] shrink-0 bg-[#2b2d30] border-t border-[#1e1f22] flex items-center pl-[14px] gap-[5px] text-[13px] tracking-[0.3px] text-[#9a9da3]">
        <span className="w-[7px] h-[7px] rounded-[2px] border border-[#548af7]" />
        Python. Start.1
      </div>
      <Taskbar />
      <WordWindow />
    </div>
  );
}
